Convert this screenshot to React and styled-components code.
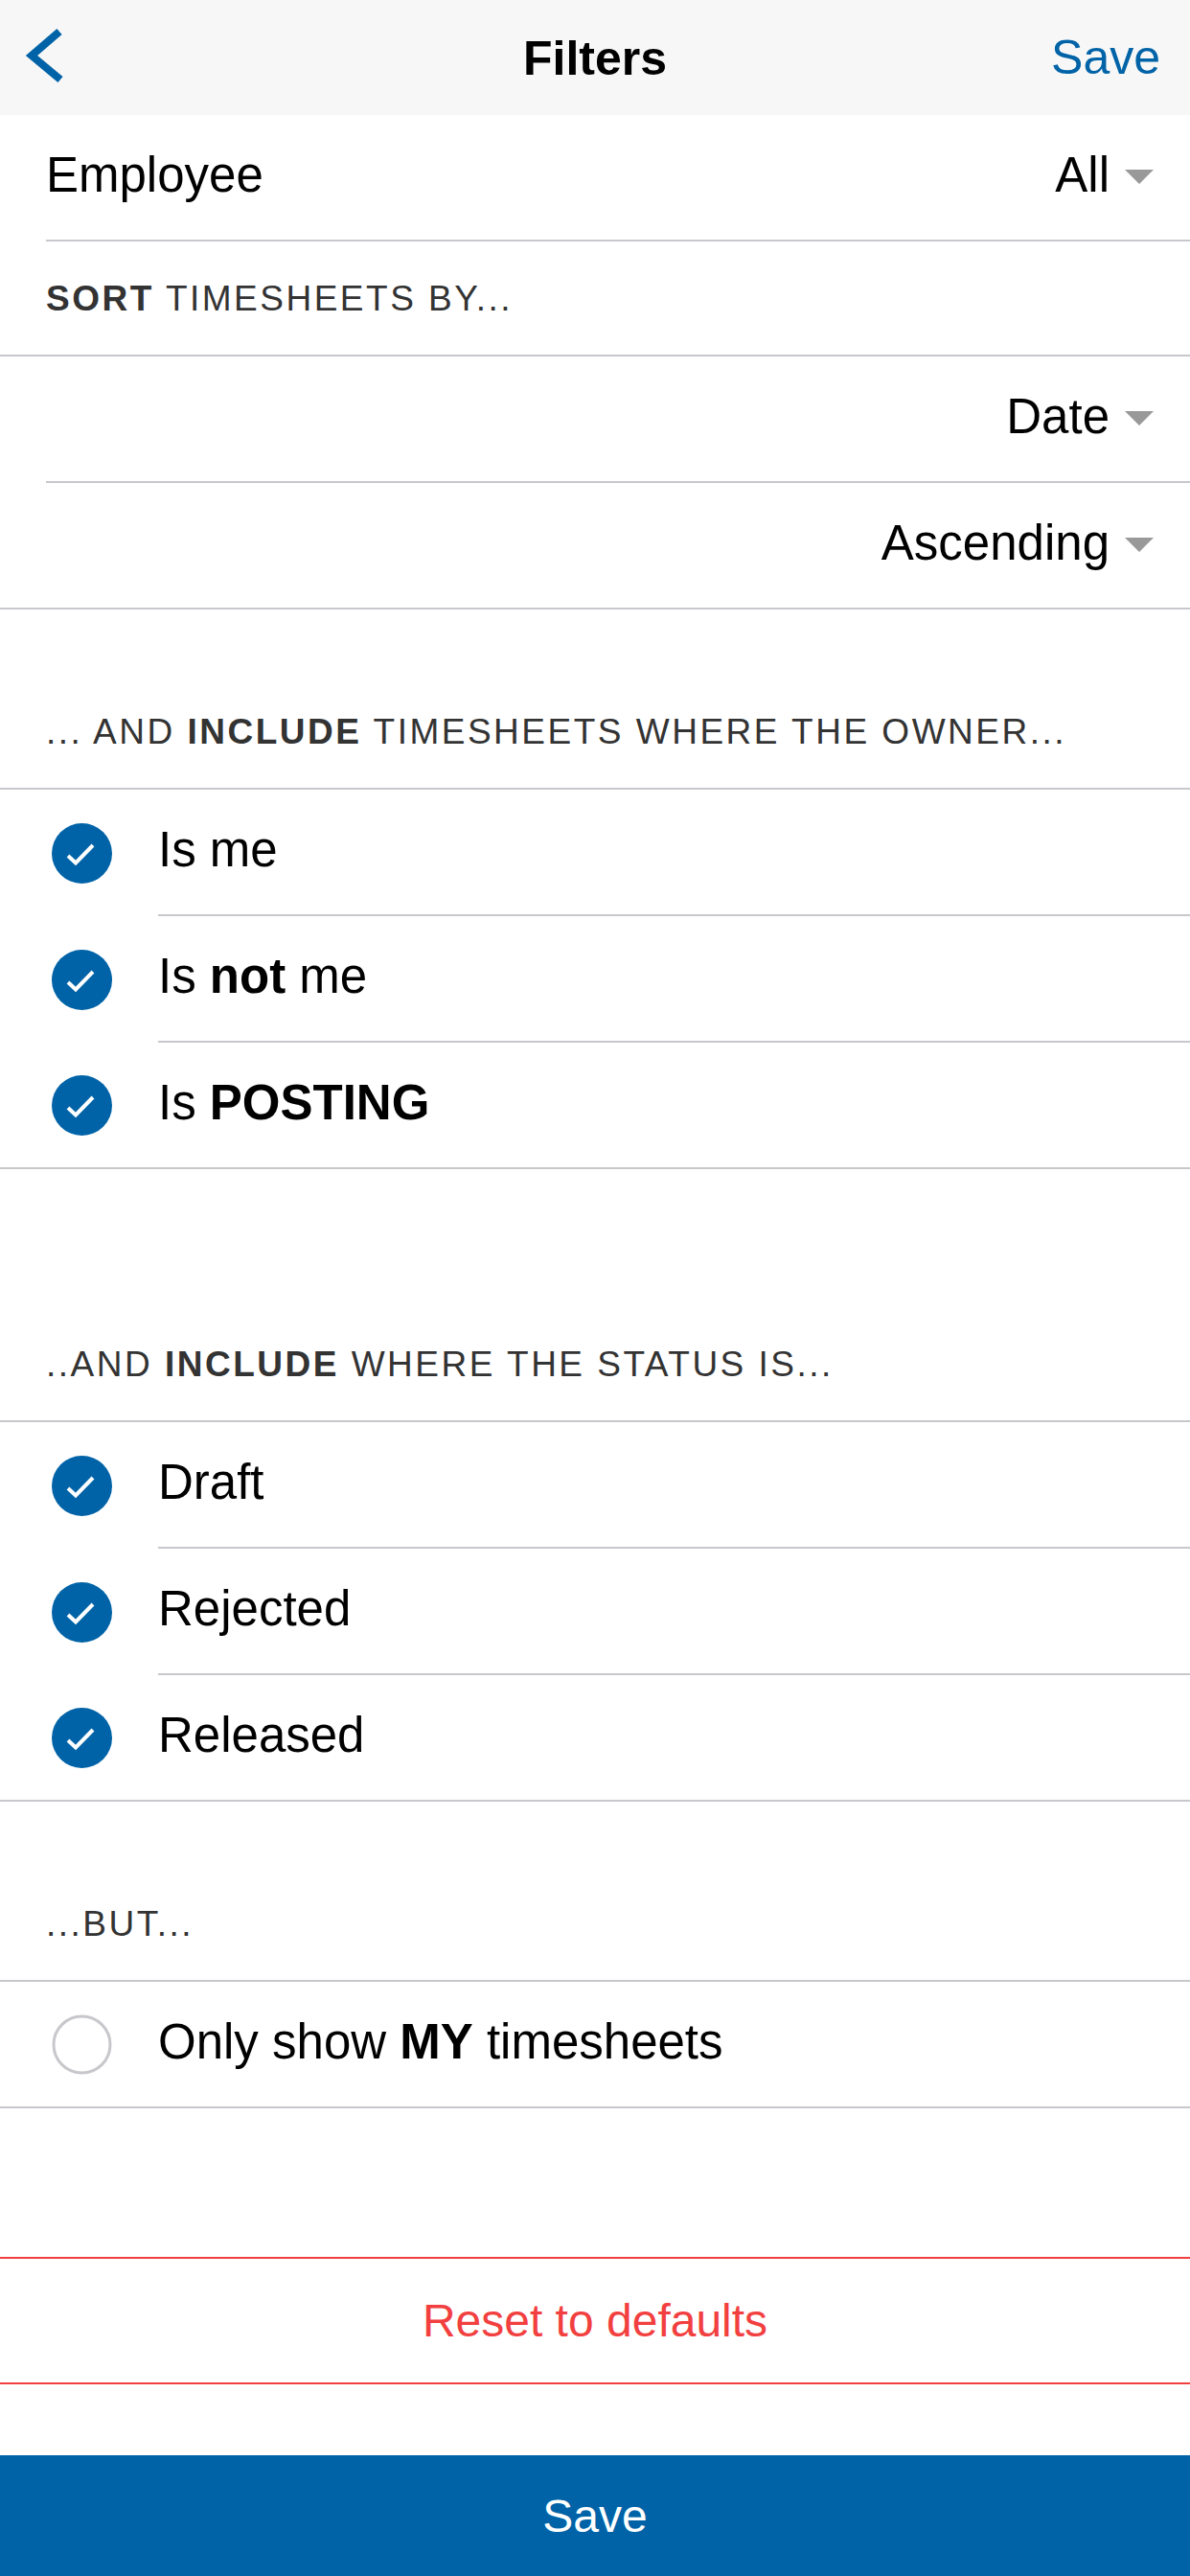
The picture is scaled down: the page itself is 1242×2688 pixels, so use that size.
import React from "react";
import styled, { createGlobalStyle } from "styled-components";

const BLUE = "#0063a7";
const LINE = "#c8c7cc";
const RED = "#f23f3f";

const Global = createGlobalStyle`
  html, body { margin: 0; padding: 0; background: #ffffff; }
  body { font-family: "Liberation Sans", Arial, sans-serif; -webkit-font-smoothing: antialiased; }
  * { box-sizing: border-box; }
`;

const Page = styled.div`
  width: 1242px;
  min-height: 2688px;
  display: flex;
  flex-direction: column;
  background: #fff;
  color: #000;
`;

const NavBar = styled.header`
  height: 120px;
  background: #f7f7f7;
  display: grid;
  grid-template-columns: 1fr auto 1fr;
  align-items: center;
`;

const BackButton = styled.div`
  display: flex;
  align-items: center;
  padding-left: 14px;
`;

const Title = styled.h1`
  margin: 0;
  font-size: 50px;
  font-weight: 700;
  line-height: 1;
  padding-top: 2px;
`;

const NavAction = styled.div`
  justify-self: end;
  padding-right: 31px;
  font-size: 50px;
  color: ${BLUE};
  line-height: 1;
`;

const Row = styled.div`
  height: 132px;
  display: flex;
  align-items: stretch;
  padding-left: ${(p) => p.$pad || 0}px;
  border-bottom: ${(p) => (p.$full ? `2px solid ${LINE}` : "none")};
`;

const IconSlot = styled.div`
  width: 165px;
  flex: none;
  display: flex;
  align-items: center;
  padding-left: 54px;
`;

const Body = styled.div`
  flex: 1;
  display: flex;
  align-items: center;
  justify-content: ${(p) => (p.$end ? "flex-end" : "space-between")};
  padding-right: 38px;
  padding-bottom: 5px;
  font-size: 51px;
  line-height: 1;
  border-bottom: ${(p) => (p.$full ? "none" : `2px solid ${LINE}`)};
`;

const Value = styled.span`
  display: flex;
  align-items: center;
  gap: 16px;
`;

const Caret = styled.span`
  width: 0;
  height: 0;
  border-left: 15px solid transparent;
  border-right: 15px solid transparent;
  border-top: 15px solid #999;
  margin-top: 4px;
`;

const SectionHeader = styled.div`
  height: ${(p) => p.$h}px;
  display: flex;
  align-items: flex-end;
  padding: 0 48px 36px;
  border-bottom: 2px solid ${LINE};
  font-size: 37px;
  line-height: 44px;
  letter-spacing: 2.5px;
  color: #333;
  text-transform: uppercase;
  white-space: nowrap;
`;

const Spacer = styled.div`
  height: ${(p) => p.$h}px;
`;

const ResetButton = styled.div`
  height: 133px;
  border-top: 2px solid ${RED};
  border-bottom: 2px solid ${RED};
  display: flex;
  align-items: center;
  justify-content: center;
  color: ${RED};
  font-size: 48px;
`;

const SaveButton = styled.div`
  height: 126px;
  background: ${BLUE};
  color: #fff;
  display: flex;
  align-items: center;
  justify-content: center;
  font-size: 48px;
`;

const Check = ({ on }) =>
  on ? (
    <svg width="63" height="63" viewBox="0 0 63 63">
      <circle cx="31.5" cy="31.5" r="31.5" fill={BLUE} />
      <polyline points="17,34 25,41.5 43,23" fill="none" stroke="#fff" strokeWidth="4" />
    </svg>
  ) : (
    <svg width="63" height="63" viewBox="0 0 63 63">
      <circle cx="31.5" cy="31.5" r="29.5" fill="#fff" stroke={LINE} strokeWidth="3" />
    </svg>
  );

const SelectRow = ({ label, value, full }) => (
  <Row $pad={48} $full={full}>
    <Body $full={full} $end={!label}>
      {label && <span>{label}</span>}
      <Value>
        {value}
        <Caret />
      </Value>
    </Body>
  </Row>
);

const CheckRow = ({ on, full, children }) => (
  <Row $full={full}>
    <IconSlot>
      <Check on={on} />
    </IconSlot>
    <Body $full={full}>
      <span>{children}</span>
    </Body>
  </Row>
);

export default function App() {
  return (
    <>
      <Global />
      <Page>
        <NavBar>
          <BackButton>
            <svg width="60" height="70" viewBox="0 0 60 70">
              <polyline points="48,8 19,33 49,58" fill="none" stroke={BLUE} strokeWidth="8" />
            </svg>
          </BackButton>
          <Title>Filters</Title>
          <NavAction>Save</NavAction>
        </NavBar>

        <SelectRow label="Employee" value="All" />

        <SectionHeader $h={120}>
          <span>
            <b>Sort</b> timesheets by...
          </span>
        </SectionHeader>
        <SelectRow value="Date" />
        <SelectRow value="Ascending" full />

        <SectionHeader $h={188}>
          <span>
            ... and <b>include</b> timesheets where the owner...
          </span>
        </SectionHeader>
        <CheckRow on>Is me</CheckRow>
        <CheckRow on>
          Is <b>not</b> me
        </CheckRow>
        <CheckRow on full>
          Is <b>POSTING</b>
        </CheckRow>

        <SectionHeader $h={264}>
          <span>
            ..and <b>include</b> where the status is...
          </span>
        </SectionHeader>
        <CheckRow on>Draft</CheckRow>
        <CheckRow on>Rejected</CheckRow>
        <CheckRow on full>
          Released
        </CheckRow>

        <SectionHeader $h={188}>
          <span>...but...</span>
        </SectionHeader>
        <CheckRow full>
          Only show <b>MY</b> timesheets
        </CheckRow>

        <Spacer $h={155} />
        <ResetButton>Reset to defaults</ResetButton>
        <Spacer $h={74} />
        <SaveButton>Save</SaveButton>
      </Page>
    </>
  );
}
